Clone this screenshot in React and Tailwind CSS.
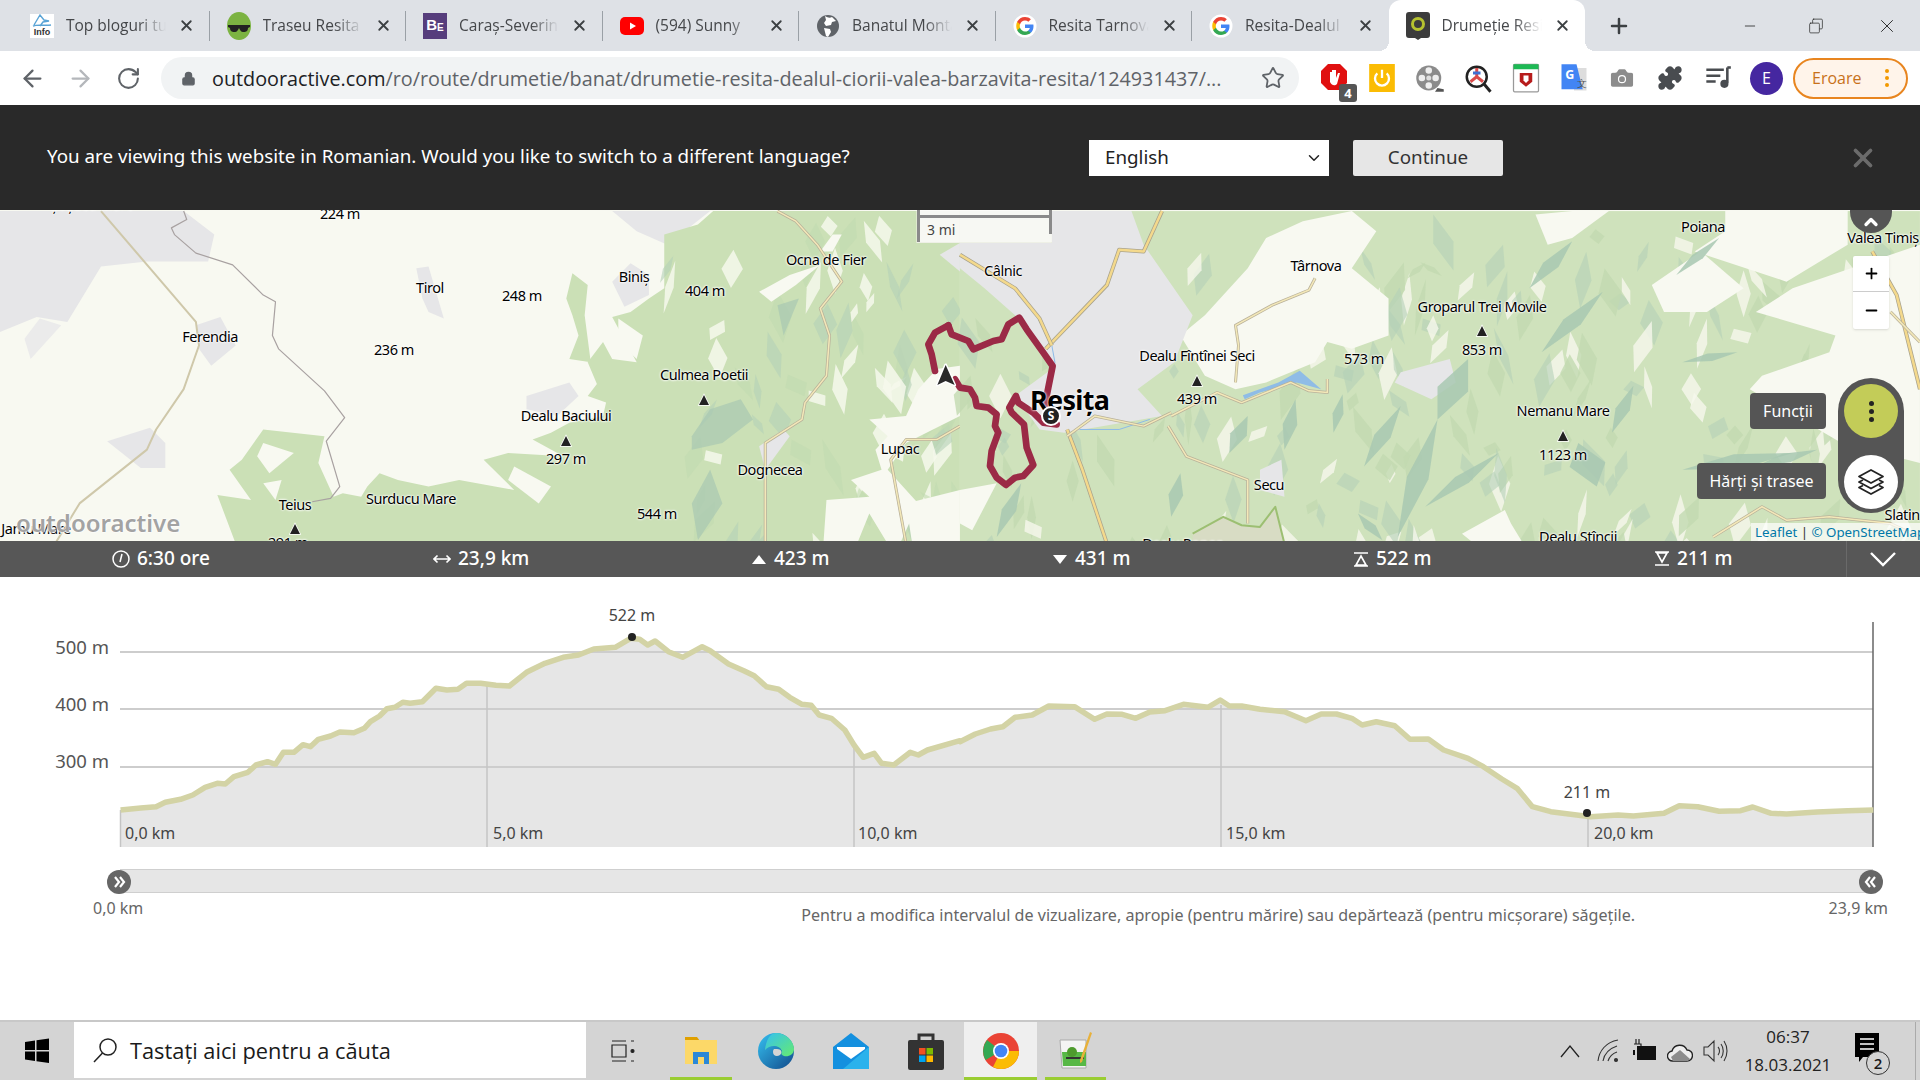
import React from 'react'
import { X, ArrowLeft, ArrowRight, RotateCw, Lock, Star, Plus, Minus, Square, Puzzle, ChevronDown, ChevronUp, Camera } from 'lucide-react'

const tabs = [
  { title: 'Top bloguri turism', icon: 'info' },
  { title: 'Traseu Resita', icon: 'green' },
  { title: 'Caraș-Severin', icon: 'be' },
  { title: '(594) Sunny', icon: 'yt' },
  { title: 'Banatul Montan', icon: 'globe' },
  { title: 'Resita Tarnova', icon: 'g' },
  { title: 'Resita-Dealul', icon: 'g' },
  { title: 'Drumeție Resita', icon: 'oa', active: true },
]

function GoogleG() {
  return (
    <svg width="24" height="24" viewBox="0 0 48 48">
      <circle cx="24" cy="24" r="23" fill="#fff" />
      <path fill="#4285f4" d="M41 24.5c0-1.300-.1-2.500-.3-3.700H24v7h9.600c-.4 2.200-1.700 4.100-3.500 5.300v4.400h5.700C39.100 34.400 41 29.900 41 24.500z" />
      <path fill="#34a853" d="M24 42c4.700 0 8.700-1.600 11.700-4.300L30 33.300c-1.600 1.100-3.600 1.700-6 1.700-4.600 0-8.500-3.100-9.900-7.300H8.300v4.600C11.200 38 17.100 42 24 42z" />
      <path fill="#fbbc05" d="M14.100 27.700c-.8-2.200-.8-5.200 0-7.400v-4.600H8.300c-2.400 4.700-2.400 11.900 0 16.600z" />
      <path fill="#ea4335" d="M24 13c2.600 0 4.900.9 6.700 2.600l5-5C32.700 7.800 28.700 6 24 6c-6.900 0-12.800 4-15.700 9.700l5.800 4.600C15.500 16.100 19.400 13 24 13z" />
    </svg>
  )
}

function Favicon({ kind }) {
  if (kind === 'g') return <GoogleG />
  if (kind === 'info') return (
    <div className="w-[24px] h-[24px] bg-white flex flex-col items-center">
      <svg width="22" height="13" viewBox="0 0 22 13"><path d="M3 11 9 1l4 5 5 1-6 1-3 4M2 12c5-2 11 0 18-1" fill="none" stroke="#5aa4d6" strokeWidth="1.400" /></svg>
      <span className="text-[9px] font-bold leading-[10px] text-[#333] font-['Liberation_Sans',sans-serif]">Info</span>
    </div>
  )
  if (kind === 'green') return (
    <svg width="24" height="28" viewBox="0 0 24 28">
      <ellipse cx="12" cy="14" rx="12" ry="14" fill="#7cb342" />
      <path d="M1 13h22v2l-2 1c0 4-3 4-5 4s-3-2-4-4c-1 2-2 4-4 4s-5 0-5-4l-2-1z" fill="#222" />
    </svg>
  )
  if (kind === 'be') return (
    <div className="w-[24px] h-[26px] bg-[#563d7c] flex items-center justify-center text-white text-[15px] font-bold font-['Liberation_Sans',sans-serif]">B<span className="text-[10px] mt-1">E</span></div>
  )
  if (kind === 'yt') return (
    <svg width="24" height="24" viewBox="0 0 24 24"><rect x="0" y="3" width="24" height="18" rx="5" fill="#f00" /><path d="M10 8.500 16 12l-6 3.500z" fill="#fff" /></svg>
  )
  if (kind === 'globe') return (
    <svg width="24" height="24" viewBox="0 0 24 24">
      <circle cx="12" cy="12" r="11" fill="#5f6368" />
      <path d="M9 2c3 2 5 2 7 1l4 4-4 1-1 3-5 1-2-3 2-3zM8 14l6 1 1 3-3 5-2-1-1-4z" fill="#fff" />
    </svg>
  )
  return (
    <svg width="24" height="28" viewBox="0 0 24 28">
      <path d="M3 0h18a3 3 0 0 1 3 3v20a3 3 0 0 1-3 3h-6l-3 2-3-2H3a3 3 0 0 1-3-3V3a3 3 0 0 1 3-3z" fill="#3c3c3c" />
      <circle cx="12" cy="12" r="5.500" fill="none" stroke="#b6c22f" strokeWidth="3" />
    </svg>
  )
}

function Tab({ tab, last }) {
  return (
    <div className={`relative w-[196.500px] h-[51px] shrink-0 flex items-center pl-[17px] ${tab.active ? 'bg-white rounded-t-[12px]' : ''}`}>
      {tab.active && <span className="absolute left-[-10px] bottom-0 w-[10px] h-[10px] bg-[radial-gradient(circle_at_0_0,transparent_10px,white_10px)]" />}
      {tab.active && <span className="absolute right-[-10px] bottom-0 w-[10px] h-[10px] bg-[radial-gradient(circle_at_100%_0,transparent_10px,white_10px)]" />}
      <span className="w-[24px] flex justify-center shrink-0"><Favicon kind={tab.icon} /></span>
      <span className="ml-[12px] w-[103px] overflow-hidden whitespace-nowrap text-[15.500px] text-[#45474a] [mask-image:linear-gradient(to_right,black_70%,transparent_97%)]">{tab.title}</span>
      <X className="ml-[9px] text-[#3c4043]" size={17} strokeWidth={2.600} />
      {!tab.active && !last && <span className="absolute right-0 top-[11px] h-[30px] w-px bg-[#9aa0a6]" />}
    </div>
  )
}

function ExtIcons() {
  return (
    <div className="flex items-center gap-[18px] ml-[20px]">
      <div className="relative w-[30px] h-[30px] flex justify-center">
        <svg width="28" height="28" viewBox="0 0 28 28"><path d="M8 1h12l7 7v12l-7 7H8l-7-7V8z" fill="#e01010" /><path d="M10 19V9h2v6-8h2v8-8h2v8l2-5h2l-3 11c-2 2-5 2-7-2z" fill="#fff" /></svg>
        <span className="absolute right-[-8px] bottom-[-9px] w-[18px] h-[18px] rounded-[3px] bg-[#555] text-white text-[13px] font-bold leading-[18px] text-center">4</span>
      </div>
      <svg width="30" height="28" viewBox="0 0 24 24"><rect x="1" width="22" height="24" fill="#fbbc04" /><path d="M8 8a6 6 0 1 0 8 0M12 5v7" fill="none" stroke="#fff" strokeWidth="2" /></svg>
      <svg width="30" height="30" viewBox="0 0 24 24"><circle cx="11" cy="12" r="10" fill="#8b8b8b" /><circle cx="11" cy="12" r="2" fill="#ddd" /><circle cx="11" cy="6" r="2.600" fill="#eee" /><circle cx="11" cy="18" r="2.600" fill="#eee" /><circle cx="5.500" cy="12" r="2.600" fill="#eee" /><circle cx="16.500" cy="12" r="2.600" fill="#eee" /><path d="M18 20l5 1v2h-7z" fill="#555" /></svg>
      <svg width="30" height="30" viewBox="0 0 24 24"><circle cx="11" cy="11" r="8" fill="#fff" stroke="#222" strokeWidth="2" /><path d="M11 4v7l-5 4M11 11l5 4" stroke="#d94b4b" strokeWidth="2.400" fill="none" /><path d="M8 8h6" stroke="#3f6fd1" strokeWidth="2.400" /><path d="M17 17l5 6" stroke="#222" strokeWidth="2.400" /></svg>
      <svg width="30" height="30" viewBox="0 0 24 24"><rect x="2" y="1" width="20" height="22" rx="1" fill="#fff" stroke="#999" /><rect x="2" y="1" width="20" height="4" fill="#1db954" /><path d="M7 8h10v7l-5 4-5-4z" fill="#b71c1c" /><path d="M10 10v4l2 2 2-2v-4z" fill="#fff" /></svg>
      <svg width="30" height="30" viewBox="0 0 24 24"><path d="M12 4h10v18H12z" fill="#ddd" /><path d="M2 1h12l5 20H2z" fill="#4285f4" /><text x="5" y="13" fontSize="10" fill="#fff" fontWeight="700">G</text><text x="14" y="19" fontSize="8" fill="#555">文</text></svg>
      <Camera className="text-white fill-[#8c8c8c] w-[30px]" size={28} strokeWidth={1} />
      <Puzzle className="text-[#494c50] fill-[#494c50] w-[30px]" size={26} strokeWidth={1.500} />
      <svg width="30" height="28" viewBox="0 0 24 24"><path d="M2 5h15M2 10h12M2 15h8M20 3v13" stroke="#494c50" strokeWidth="2.200" fill="none" /><circle cx="17.500" cy="17" r="3.500" fill="#494c50" /><path d="M20 3h3" stroke="#494c50" strokeWidth="2.200" /></svg>
      <div className="w-[33px] h-[33px] rounded-full bg-[#4527a0] text-white text-[16px] flex items-center justify-center ml-[-1px]">E</div>
      <div className="w-[115px] h-[41px] ml-[-8px] shrink-0 rounded-full border-2 border-[#e8851f] bg-[#fff4ea] flex items-center justify-between pl-[17px] pr-[17px] text-[#c8711a] text-[16px]">
        Eroare
        <span className="flex flex-col gap-[3px]">
          <span className="w-[4px] h-[4px] rounded-full bg-[#f29900]" />
          <span className="w-[4px] h-[4px] rounded-full bg-[#f29900]" />
          <span className="w-[4px] h-[4px] rounded-full bg-[#f29900]" />
        </span>
      </div>
    </div>
  )
}

const mapLabels = [
  ['Șoșdea Mare', 92, -5], ['224 m', 340, 4], ['Tirol', 430, 78], ['248 m', 522, 86], ['Biniș', 634, 67], ['404 m', 705, 81],
  ['Ocna de Fier', 826, 50], ['Ferendia', 210, 127], ['236 m', 394, 140], ['Culmea Poetii', 704, 165], ['Dealu Baciului', 566, 206],
  ['297 m', 566, 249], ['Dognecea', 770, 260], ['Lupac', 900, 239], ['Teius', 295, 295], ['Surducu Mare', 411, 289],
  ['544 m', 657, 304], ['Jamu Mare', 36, 319], ['291 m', 288, 333],
  ['Câlnic', 1003, 61], ['Târnova', 1316, 56], ['Poiana', 1703, 17], ['Valea Timiș', 1883, 28], ['Groparul Trei Movile', 1482, 97],
  ['853 m', 1482, 140], ['Dealu Fîntînei Seci', 1197, 146], ['439 m', 1197, 189], ['573 m', 1364, 149], ['Nemanu Mare', 1563, 201],
  ['1123 m', 1563, 245], ['Secu', 1269, 275], ['Slatina', 1906, 305], ['Dealu Stîncii', 1578, 327], ['Dealu Popor', 1182, 334],
]

const peaks = [[704, 190], [566, 231], [295, 319], [1482, 121], [1197, 171], [1563, 226]]

// tapered shape between two points, wide in the middle, like the shaded slopes on the map
function spindle(x1, y1, x2, y2, w) {
  const mx = (x1 + x2) / 2
  const my = (y1 + y2) / 2
  const len = Math.hypot(x2 - x1, y2 - y1) || 1
  const nx = ((y2 - y1) / len) * w
  const ny = ((x1 - x2) / len) * w
  return `${x1},${y1} ${mx + nx},${my + ny} ${x2},${y2} ${mx - nx},${my - ny}`
}

// fixed pseudo random flecks so the terrain has some grain
function flecks(count, seed, xMin, xMax, yMin, yMax) {
  const out = []
  let s = seed
  const next = () => {
    s = (s * 16807) % 2147483647
    return s / 2147483647
  }
  for (let i = 0; i < count; i++) {
    const x = xMin + next() * (xMax - xMin)
    const y = yMin + next() * (yMax - yMin)
    const dx = (next() - 0.5) * 70
    const dy = 40 + next() * 130
    out.push({ pts: spindle(Math.round(x), Math.round(y), Math.round(x + dx), Math.round(y + dy), 6 + next() * 14), tone: Math.floor(next() * 3) })
  }
  return out
}

const tones = ['#c2dab0', '#f6f8ec', '#b4d0b8']
const leftFlecks = flecks(70, 77, 1100, 1560, 40, 1000)
const rightFlecks = flecks(190, 4242, 0, 1560, 30, 1010)

const rightRidges = [
  [830, 470, 780, 650, 26], [780, 650, 715, 1000, 18], [1050, 270, 950, 450, 16], [470, 640, 440, 750, 14], [548, 590, 530, 740, 12],
  [720, 610, 660, 790, 14], [625, 575, 610, 690, 9], [1010, 720, 1040, 850, 30], [1180, 800, 1360, 750, 22], [1100, 550, 1065, 690, 12],
  [1270, 450, 1180, 480, 12], [360, 810, 345, 940, 12], [880, 750, 760, 910, 14], [1000, 120, 930, 260, 14], [1400, 740, 1300, 790, 14],
  [100, 840, 60, 1000, 12], [1240, 110, 1170, 220, 10], [650, 930, 690, 1010, 10],
]

function Poly({ pts, fill, opacity }) {
  return <polygon points={pts} fill={fill} opacity={opacity} />
}

function Line({ pts, color, w }) {
  return <polyline points={pts} fill="none" stroke={color} strokeWidth={w} vectorEffect="non-scaling-stroke" strokeLinejoin="round" />
}

function Road({ pts }) {
  return (
    <>
      <Line pts={pts} color="#b9b19a" w={3} />
      <Line pts={pts} color="#f3e8b8" w={1.500} />
    </>
  )
}

function YellowRoad({ pts }) {
  return (
    <>
      <Line pts={pts} color="#a9a38d" w={4} />
      <Line pts={pts} color="#f4d98c" w={2.500} />
    </>
  )
}

// map is a drawing, traced in the coordinates of the two zoomed crops
function MapArt() {
  const ridge = '#a8c8b2'
  return (
    <svg className="absolute inset-0" width="1920" height="332" viewBox="0 0 1920 332">
      <rect width="1920" height="332" fill="#f8f9f1" />
      <g transform="translate(0,-9) scale(.6122,.336)">
        <Poly fill="#e6e6e8" pts="0,30 300,30 350,100 340,180 240,180 165,195 110,360 60,345 0,390" />
        <Poly fill="#ebebeb" pts="40,410 65,350 100,370 50,470" />
        <Poly fill="#e6e6e8" pts="1000,30 1160,30 1090,130 1040,90" />
        <Poly fill="#e6e6e8" pts="680,200 700,195 725,350 700,330 690,290" />
        <Poly fill="#e6e6e8" pts="1000,240 1030,185 1060,220 1060,280 1020,315" />
        <Poly fill="#e6e6e8" pts="320,370 360,345 385,430 345,490 325,440" />
        <Poly fill="#e6e6e8" pts="860,580 930,540 945,580 910,640 860,620" />
        <Poly fill="#e6e6e8" pts="175,715 245,675 270,720 270,795 230,795" />
        <Poly fill="#cbe0b6" pts="1085,100 1140,70 1165,30 1568,30 1568,1020 385,1020 355,875 410,890 375,800 395,770 430,680 530,700 520,780 545,880 560,870 590,880 600,850 620,810 650,830 700,850 750,830 840,860 790,770 830,750 920,760 870,710 900,690 930,660 985,640 990,600 960,580 975,545 960,480 985,420 1000,470 1040,480 1000,345 1030,330 1060,290 1085,260" />
        <Poly fill="#cbe0b6" pts="925,290 935,215 960,250 955,340 965,480 930,470 945,400 935,340" />
        {leftFlecks.map((f, i) => <Poly key={i} pts={f.pts} fill={tones[f.tone]} opacity={f.tone === 1 ? 0.85 : 0.6} />)}
        <Poly fill="#f8f9f1" pts="1568,490 1530,500 1500,560 1480,640 1420,650 1450,700 1430,740 1440,800 1390,830 1420,880 1350,890 1345,1020 1400,1020 1420,930 1450,1020 1470,1020 1500,900 1450,800 1480,720 1568,640" />
        <Poly fill="#f8f9f1" pts="1480,900 1568,860 1568,1020 1490,1020" />
        <Poly fill="#f8f9f1" pts="1240,270 1290,220 1340,190 1300,250 1260,300" />
        <Poly fill="#f8f9f1" pts="430,720 480,750 440,810 420,760" />
        <Poly fill="#f8f9f1" pts="840,790 900,850 880,900 830,830" />
        <Poly fill="#f8f9f1" pts="430,840 460,830 450,890" />
        <Poly fill="#f8f9f1" pts="1010,350 1050,400 1040,470 1010,420" />
        <Poly fill="#f8f9f1" pts="1360,100 1375,100 1360,150 1340,150" />
        <Poly fill={ridge} opacity=".7" pts="1130,700 1160,620 1210,590 1230,650 1180,720 1130,740" />
        <Poly fill={ridge} opacity=".7" pts="1160,800 1180,900 1140,1010 1130,900" />
        <Poly fill={ridge} opacity=".7" pts="1270,310 1305,290 1280,400" />
        <Poly fill="#e6e6e8" pts="1240,730 1280,680 1290,700 1250,800" />
        <Poly fill="#eef0e6" pts="1497,30 1568,30 1568,125 1497,125" />
        <Poly fill="#e6e6e8" pts="1568,125 1568,210 1535,160" />
        <Line pts="165,30 320,360 325,430 300,560 255,680 240,740 130,900 90,1020" color="#cfc8aa" w={2} />
        <Line pts="300,30 305,55 280,80 285,100 320,155 380,190 430,280 450,300 445,400 455,440 530,565 563,645 533,715 555,850 540,885 510,895" color="#a8a1a1" w={1.200} />
        <Road pts="1270,30 1300,60 1335,130 1375,240 1340,320 1355,400 1350,520 1315,600 1310,650 1250,720 1250,1020" />
        <Road pts="1568,670 1530,710 1480,710 1455,770 1480,1020" />
      </g>
      <g transform="translate(960,-9) scale(.6122,.336)">
        <rect x="0" y="30" width="1568" height="1000" fill="#cfe2bc" />
        {rightFlecks.map((f, i) => <Poly key={i} pts={f.pts} fill={tones[f.tone]} opacity={f.tone === 2 ? 0.6 : 0.8} />)}
        <Poly fill="#f8f9f1" pts="500,110 560,60 640,30 680,90 640,200 700,290 700,400 640,440 600,420 580,480 500,540 450,560 400,520 360,400 400,340 470,200" />
        <Poly fill="#f8f9f1" pts="1250,30 1450,30 1450,130 1350,240 1200,150 1250,90" />
        <Poly fill="#f8f9f1" pts="1360,260 1568,130 1568,780 1440,720 1290,560 1310,520 1420,450 1430,400 1300,330" />
        <Poly fill="#f8f9f1" pts="940,40 1000,30 1060,30 1000,110 960,130" />
        <Poly fill="#f8f9f1" pts="1130,250 1210,150 1280,260 1220,330 1150,330" />
        <Poly fill="#f8f9f1" pts="900,960 890,920 820,990 840,1020 920,1020" />
        <Poly fill="#f8f9f1" pts="0,860 60,840 20,980 0,960" />
        <Poly fill="#e6e6e8" pts="0,125 150,125 150,30 280,30 300,130 380,340 350,480 290,560 330,640 170,690 130,680 90,580 150,500 120,420 90,340 40,260 0,200" />
        <Poly fill="#e6e6e8" pts="720,510 800,470 810,540 770,590 710,540" />
        <Poly fill="#e6e6e8" pts="490,800 525,770 530,880 490,860" />
        <Poly fill="#eef0e6" pts="0,30 150,30 150,125 0,125" />
        <Poly fill="#d8dcc4" pts="380,990 430,940 460,965 490,970 515,910 530,1020 380,1020" />
        <Line pts="380,990 430,940 460,965 490,970 515,910 530,1020" color="#9cbf72" w={2} />
        {rightRidges.map(([a, b, c, d, w]) => <Poly key={`${a}-${b}`} pts={spindle(a, b, c, d, w)} fill={ridge} opacity={0.85} />)}
        <Poly fill="#8fbce6" pts="462,578 520,540 555,505 590,560 550,540 490,570 465,590" />
        <Line pts="90,260 125,340 150,430 155,480 140,620" color="#8cbbe8" w={1} />
        <Line pts="195,680 260,680 310,650" color="#8cbbe8" w={1} />
        <Road pts="580,230 570,265 510,310 450,370 455,430 450,540" />
        <Road pts="345,640 420,570 460,600 500,570 540,540 570,565 600,570 600,530" />
        <Road pts="340,670 370,760 470,830 470,960" />
        <Road pts="1230,1000 1310,910 1350,950 1420,940 1520,960 1568,1000" />
        <YellowRoad pts="330,30 300,150 260,145 240,250 140,440" />
        <YellowRoad pts="0,160 90,260 130,350 150,430" />
        <YellowRoad pts="175,680 200,800 240,1020" />
        <Road pts="175,700 220,640 300,670 345,630" />
        <YellowRoad pts="1490,150 1530,280 1568,560" />
        <Road pts="1520,330 1568,420" />
      </g>
      {peaks.map(([x, y]) => (
        <polygon key={x} points={`${x - 5},${y + 5} ${x},${y - 5} ${x + 5},${y + 5}`} fill="#222" stroke="#fff" strokeWidth="1.500" paintOrder="stroke" />
      ))}
      <g transform="translate(880,81) scale(.3333)" fill="none" stroke="#9b2a46" strokeWidth="20" strokeLinejoin="round" strokeLinecap="round">
        <polyline points="205,103 165,125 145,160 155,190 165,240" />
        <polyline points="225,265 240,290 270,295 285,320 290,345 325,350 350,370 345,405 355,425 335,480 330,525 350,560 378,582 405,560 430,555 460,522 440,470 432,400 395,365 388,350 408,315 415,335 460,365 490,395 530,400" />
        <polyline points="205,103 215,130 265,150 280,175 340,150 365,145 385,100 418,80 440,115 490,185 518,225 505,290 495,340 520,375" />
        <polygon points="197,222 224,282 197,270 172,282" fill="#2a2a2a" stroke="#fff" strokeWidth="9" paintOrder="stroke" />
      </g>
    </svg>
  )
}

function MapView() {
  return (
    <div className="relative h-[331px] overflow-hidden font-['Noto_Sans',sans-serif]">
      <MapArt />
      {mapLabels.map(([text, x, y]) => (
        <span key={text} className="absolute -translate-x-1/2 -translate-y-1/2 whitespace-nowrap text-[14.500px] text-black tracking-[-0.450px] [text-shadow:0_0_2px_#fff,0_0_2px_#fff,0_0_3px_#fff]" style={{ left: x, top: y }}>{text}</span>
      ))}
      <span className="absolute left-[1030px] top-[172px] text-[27px] leading-[36px] font-bold text-black tracking-[-0.700px] [text-shadow:0_0_2px_#fff,0_0_3px_#fff]">Reșița</span>
      <span className="absolute left-[1041px] top-[196px] w-[20px] h-[20px] rounded-full bg-[#222] border-2 border-white text-white text-[12px] font-bold leading-[16px] text-center">S</span>
      <span className="absolute left-[16px] top-[298px] text-[24px] leading-[30px] font-semibold text-[#a3a3a3] [text-shadow:0_0_2px_#fff,0_0_2px_#fff,0_0_2px_#fff]">outdooractive</span>

      <div className="absolute left-[917px] top-0 w-[135px] h-[32px] bg-white/50">
        <div className="h-[8px] border-[3px] border-t-0 border-[#8a8a8a]" />
        <div className="h-[24px] border-l-[3px] border-[#8a8a8a] pl-[7px] text-[14px] text-[#444] leading-[24px] relative">
          3 mi
          <span className="absolute right-0 top-0 h-[16px] w-[3px] bg-[#8a8a8a]" />
        </div>
      </div>
      <div className="absolute left-[1850px] top-[-19px] w-[42px] h-[42px] rounded-full bg-[#555] flex items-end justify-center text-white pb-[1px]">
        <ChevronUp size={20} strokeWidth={4} />
      </div>
      <div className="absolute left-[1853px] top-[46px] w-[36px] h-[73px] bg-white rounded-[2px] shadow flex flex-col text-black">
        <div className="h-[36px] border-b border-[#ccc] flex items-center justify-center"><Plus size={17} strokeWidth={2.500} /></div>
        <div className="flex-1 flex items-center justify-center"><Minus size={17} strokeWidth={2.500} /></div>
      </div>
      <div className="absolute left-[1750px] top-[183px] w-[76px] h-[36px] rounded-[4px] bg-[#555] text-white text-[16px] flex items-center justify-center">Funcții</div>
      <div className="absolute left-[1697px] top-[253px] w-[129px] h-[36px] rounded-[4px] bg-[#555] text-white text-[16px] flex items-center justify-center whitespace-nowrap">Hărți și trasee</div>
      <div className="absolute left-[1838px] top-[168px] w-[66px] h-[135px] rounded-full bg-[#555] flex flex-col items-center pt-[6px] gap-[17px]">
        <div className="w-[54px] h-[54px] rounded-full bg-[#c3cc58] flex flex-col items-center justify-center gap-[3px]">
          <span className="w-[5px] h-[5px] rounded-full bg-[#222]" />
          <span className="w-[5px] h-[5px] rounded-full bg-[#222]" />
          <span className="w-[5px] h-[5px] rounded-full bg-[#222]" />
        </div>
        <div className="w-[54px] h-[54px] rounded-full bg-white flex items-center justify-center">
          <svg width="28" height="28" viewBox="0 0 28 28" fill="none" stroke="#222" strokeWidth="1.800" strokeLinejoin="round">
            <path d="M14 2 26 8.500 14 15 2 8.500z" />
            <path d="M6 12 2 14l12 6.500L26 14l-4-2" />
            <path d="M6 17.500 2 19.500 14 26l12-6.500-4-2" />
          </svg>
        </div>
      </div>
      <div className="absolute right-0 bottom-0 h-[18px] pl-[4px] bg-white/70 text-[13.300px] leading-[18px] text-[#333] whitespace-nowrap overflow-hidden w-[169px]">
        <span className="text-[#0078a8]">Leaflet</span> | <span className="text-[#0078a8]">© OpenStreetMap</span>
      </div>
    </div>
  )
}

function StatIcon({ kind }) {
  if (kind === 'clock') return <svg width="18" height="18" viewBox="0 0 18 18" fill="none" stroke="#fff" strokeWidth="1.500"><circle cx="9" cy="9" r="8" /><path d="M10 4 8 12" /></svg>
  if (kind === 'dist') return <svg width="18" height="18" viewBox="0 0 18 18" fill="none" stroke="#fff" strokeWidth="1.600"><path d="M1 9h16M4.500 5.500 1 9l3.500 3.500M13.500 5.500 17 9l-3.500 3.500" /></svg>
  if (kind === 'up') return <svg width="16" height="18" viewBox="0 0 16 18"><path d="M1 14 8 5l7 9z" fill="#fff" /></svg>
  if (kind === 'down') return <svg width="16" height="18" viewBox="0 0 16 18"><path d="M1 5h14l-7 9z" fill="#fff" /></svg>
  if (kind === 'max') return <svg width="16" height="18" viewBox="0 0 16 18" fill="none" stroke="#fff" strokeWidth="1.600"><path d="M1 3h14M3 15h10L8 6zM1 16h14" /></svg>
  return <svg width="16" height="18" viewBox="0 0 16 18" fill="none" stroke="#fff" strokeWidth="1.600"><path d="M1 2h14M3 3h10l-5 9zM1 15h14" /></svg>
}

const stats = [
  { icon: 'clock', text: '6:30 ore', cell: 'w-[321px]' },
  { icon: 'dist', text: '23,9 km', cell: 'w-[318px]' },
  { icon: 'up', text: '423 m', cell: 'w-[301px]' },
  { icon: 'down', text: '431 m', cell: 'w-[301px]' },
  { icon: 'max', text: '522 m', cell: 'w-[301px]' },
  { icon: 'min', text: '211 m', cell: 'w-[192px]' },
]

function StatsBar() {
  return (
    <div className="h-[36px] bg-[#575757] flex items-center pl-[112px] text-white text-[19px] leading-[34px] font-medium font-['Noto_Sans',sans-serif]">
      {stats.map((s) => (
        <div key={s.text} className={`flex items-center gap-[7px] ${s.cell}`}>
          <StatIcon kind={s.icon} />
          <span className="-mt-[2px]">{s.text}</span>
        </div>
      ))}
      <div className="h-full w-[73px] border-l border-[#6a6a6a] flex items-center justify-center">
        <svg width="28" height="16" viewBox="0 0 28 16" fill="none" stroke="#fff" strokeWidth="2.400"><path d="M2 2l12 12L26 2" /></svg>
      </div>
    </div>
  )
}

const profileL = [[197,690],[230,684],[255,680],[270,667],[295,658],[315,645],[335,622],[355,610],[368,612],[382,590],[405,577],[418,555],[437,545],[450,553],[463,517],[480,517],[495,494],[507,500],[520,478],[540,468],[555,456],[578,458],[595,445],[605,425],[620,408],[632,386],[645,382],[658,367],[670,370],[690,365],[712,325],[730,330],[748,328],[762,310],[785,310],[810,316],[832,318],[860,277],[890,250],[920,232],[945,225],[970,207],[1005,202],[1030,175],[1045,178],[1058,195],[1070,183],[1092,215],[1115,232],[1147,200],[1160,212],[1190,252],[1215,272],[1232,287],[1252,320],[1272,328],[1290,352],[1310,373],[1325,376],[1338,405],[1358,415],[1380,450],[1395,495],[1410,532],[1428,520],[1440,550],[1460,555],[1487,517],[1500,525],[1515,510],[1568,482]]
const profileR = [[0,485],[25,462],[50,447],[70,440],[90,412],[118,405],[145,378],[187,380],[220,418],[240,402],[265,403],[287,415],[310,396],[335,392],[365,373],[405,382],[425,360],[440,378],[460,378],[490,388],[530,395],[565,422],[590,402],[615,402],[640,415],[657,435],[680,425],[710,437],[735,478],[765,477],[790,510],[830,535],[855,560],[885,597],[910,625],[935,680],[965,695],[1030,710],[1075,705],[1100,708],[1150,700],[1175,677],[1205,680],[1240,694],[1275,692],[1295,681],[1325,700],[1350,702],[1400,696],[1450,692],[1492,690]]

const profile = [
  ...profileL.map(([x, y]) => `${(x * 0.6122).toFixed(1)},${(3 + y / 3).toFixed(1)}`),
  ...profileR.map(([x, y]) => `${(960 + x * 0.6122).toFixed(1)},${(3 + y / 3).toFixed(1)}`),
].join(' ')

const axisY = [['500 m', 71], ['400 m', 128], ['300 m', 185]]
const axisX = [['0,0 km', 125], ['5,0 km', 493], ['10,0 km', 858], ['15,0 km', 1226], ['20,0 km', 1594]]

function Chart() {
  return (
    <div className="relative h-[270px]">
      <svg className="absolute inset-0" width="1920" height="270" viewBox="0 0 1920 270">
        <polygon points={`120.600,270 ${profile} 1873,270`} fill="#e6e6e6" />
        {[75, 132, 190].map((y) => <line key={y} x1="120" x2="1873" y1={y} y2={y} stroke="#cdcdcd" strokeWidth="2" />)}
        {[[120.500, 233], [487, 106], [854, 168], [1221, 128], [1588, 238]].map(([x, y]) => <line key={x} x1={x} x2={x} y1={y} y2="270" stroke="#c4c4c4" strokeWidth="1.500" />)}
        <line x1="1873" x2="1873" y1="45" y2="270" stroke="#666" strokeWidth="1.500" />
        <polyline points={profile} fill="none" stroke="#d3d3a5" strokeWidth="5.500" strokeLinejoin="round" />
        <circle cx="632" cy="60" r="4" fill="#222" />
        <circle cx="1587" cy="236" r="4" fill="#222" />
      </svg>
      <span className="absolute left-[632px] top-[38px] -translate-x-1/2 -translate-y-1/2 text-[16px] text-[#444]">522 m</span>
      <span className="absolute left-[1587px] top-[215px] -translate-x-1/2 -translate-y-1/2 text-[16px] text-[#444]">211 m</span>
      {axisY.map(([t, y]) => (
        <span key={t} className="absolute right-[1811px] -translate-y-1/2 text-[18.500px] text-[#555] whitespace-nowrap" style={{ top: y - 1 }}>{t}</span>
      ))}
      {axisX.map(([t, x]) => (
        <span key={t} className="absolute top-[256px] -translate-y-1/2 text-[16px] text-[#444] whitespace-nowrap" style={{ left: x }}>{t}</span>
      ))}
    </div>
  )
}

function Handle({ right }) {
  return (
    <span className={`absolute top-0 w-[24px] h-[24px] rounded-full bg-[#666] text-white flex items-center justify-center ${right ? 'right-[-10px]' : 'left-[-13px]'}`}>
      <svg width="14" height="14" viewBox="0 0 14 14" fill="none" stroke="#fff" strokeWidth="2.200">
        {right ? <path d="M6 2 2 7l4 5M11 2 7 7l4 5" /> : <path d="M3 2l4 5-4 5M8 2l4 5-4 5" />}
      </svg>
    </span>
  )
}

function Taskbar() {
  return (
    <div className="h-[60px] bg-[#d4d4d4] border-t-2 border-[#c8c8c8] flex items-stretch font-['Open_Sans',sans-serif] text-[#1a1a1a]">
      <div className="w-[74px] flex items-center justify-center">
        <svg width="26" height="26" viewBox="0 0 26 26" fill="#000"><path d="M1 4l10-1.500V12H1zM12.500 2.300 25 .5V12H12.500zM1 13.500h10V23L1 21.500zM12.500 13.500H25V25l-12.500-1.800z" /></svg>
      </div>
      <div className="w-[512px] h-[56px] bg-white flex items-center pl-[17px] gap-[11px]">
        <svg width="28" height="28" viewBox="0 0 28 28" fill="none" stroke="#222" strokeWidth="1.500"><circle cx="17" cy="11" r="8" /><path d="M11.500 17 3 26" /></svg>
        <span className="text-[21.800px] mt-[2px]">Tastați aici pentru a căuta</span>
      </div>
      <div className="w-[74px] flex items-center justify-center">
        <svg width="24" height="26" viewBox="0 0 24 26" fill="none" stroke="#222" strokeWidth="1.200"><path d="M1 3h14M1 23h14M1 7h14v12H1zM20 3h3M20 23h3" /><circle cx="21.500" cy="13" r="1.500" fill="#222" /></svg>
      </div>
      <div className="relative w-[62px] ml-[10px] mr-[13px] flex items-center justify-center">
        <svg width="34" height="34" viewBox="0 0 34 34"><path d="M1 3h12l3 4H1z" fill="#e0a000" /><path d="M1 6h32v24H1z" fill="#fcd868" /><path d="M9 18h16v12h-5v-7h-6v7H9z" fill="#2b88d8" /></svg>
        <span className="absolute bottom-0 inset-x-0 h-[3px] bg-[#9acd32]" />
      </div>
      <div className="w-[62px] flex items-center justify-center">
        <svg width="38" height="38" viewBox="0 0 38 38"><defs><linearGradient id="edgeA" x1="0" y1="0" x2="1" y2="1"><stop offset="0" stopColor="#35c1f1" /><stop offset="1" stopColor="#114a8b" /></linearGradient><linearGradient id="edgeB" x1="0" y1="0" x2="1" y2="1"><stop offset="0" stopColor="#35c1f1" /><stop offset="1" stopColor="#66eb6e" /></linearGradient></defs><circle cx="19" cy="19" r="18" fill="url(#edgeA)" /><path d="M19 1c10 0 18 8 18 16 0 6-6 8-10 7-3-1-3-3-2-5-2-6-12-7-17-1C9 8 13 1 19 1z" fill="url(#edgeB)" /><path d="M20 17c4 0 6 3 3 6-3 2-7 1-7-3s2-3 4-3z" fill="#d4d4d4" /></svg>
      </div>
      <div className="w-[80px] ml-[4px] flex items-center justify-center">
        <svg width="36" height="36" viewBox="0 0 36 36"><path d="M18 0 36 14v22H0V14z" fill="#1490df" /><path d="M4 14h28v2L18 26 4 16z" fill="#fff" /><path d="M36 14v22H10z" fill="#35c1f1" opacity=".7" /></svg>
      </div>
      <div className="w-[70px] flex items-center justify-center">
        <svg width="36" height="38" viewBox="0 0 36 38"><path d="M11 8V3h14v5" fill="none" stroke="#333" strokeWidth="3" /><rect y="8" width="36" height="30" rx="2" fill="#333" /><rect x="11" y="16" width="6.500" height="6.500" fill="#f25022" /><rect x="18.500" y="16" width="6.500" height="6.500" fill="#7fba00" /><rect x="11" y="23.500" width="6.500" height="6.500" fill="#00a4ef" /><rect x="18.500" y="23.500" width="6.500" height="6.500" fill="#ffb900" /></svg>
      </div>
      <div className="relative w-[73px] ml-[3px] bg-[#efefef] flex items-center justify-center">
        <svg width="36" height="36" viewBox="0 0 36 36"><circle cx="18" cy="18" r="18" fill="#ea4335" /><path d="M18 18 2.500 27A18 18 0 0 1 4 7z" fill="#34a853" /><path d="M18 18h18a18 18 0 0 1-18 18 18 18 0 0 1-8-2z" fill="#fbbc05" /><circle cx="18" cy="18" r="8" fill="#fff" /><circle cx="18" cy="18" r="6.300" fill="#4285f4" /></svg>
        <span className="absolute bottom-0 inset-x-0 h-[3px] bg-[#9acd32]" />
      </div>
      <div className="relative w-[61px] ml-[8px] flex items-center justify-center">
        <svg width="36" height="38" viewBox="0 0 36 38"><path d="M2 8h26v28H4z" fill="#f4f4f4" stroke="#aaa" /><path d="M4 20h24v14H5z" fill="#57b846" /><circle cx="14" cy="20" r="5" fill="#4e9b2e" /><path d="M8 26h18" stroke="#333" strokeWidth="2" /><path d="M34 1 24 30l-2 1 0-3L32 0z" fill="#e8b13a" /></svg>
        <span className="absolute bottom-0 inset-x-0 h-[3px] bg-[#9acd32]" />
      </div>
      <div className="ml-auto flex items-center pr-[4px]">
        <svg width="20" height="14" viewBox="0 0 20 14" fill="none" stroke="#222" strokeWidth="1.300" className="mr-[16px]"><path d="M1 13 10 2l9 11" /></svg>
        <svg width="24" height="24" viewBox="0 0 24 24" fill="none" stroke="#333" strokeWidth="1.100" className="mr-[11px]"><path d="M2 22C3 12 10 3 22 1M7 22c1-6 5-12 14-15M12 22c1-3 3-7 9-9" /><circle cx="20" cy="21" r="1.500" fill="#333" /></svg>
        <svg width="26" height="24" viewBox="0 0 26 24" className="mr-[10px]"><path d="M5 0v5M8 0v5M3 5h7v5H7v4" stroke="#222" strokeWidth="1.200" fill="none" /><rect x="6" y="7" width="19" height="14" fill="#111" /><rect x="2" y="11" width="2" height="5" fill="#111" /></svg>
        <svg width="26" height="22" viewBox="0 0 26 22"><path d="M6 21a5 5 0 0 1-1-10 8 8 0 0 1 15-1 5.500 5.500 0 0 1 0 11z" fill="#eee" stroke="#222" strokeWidth="1.400" /><path d="M4 17l9-7 10 9-2 2H6z" fill="#8d8d8d" /></svg>
        <svg width="26" height="26" viewBox="0 0 26 26" fill="none" stroke="#333" strokeWidth="1.100" className="ml-[10px]"><path d="M1 9h4l6-6v20l-6-6H1zM15 9c2 2 2 6 0 8M18 6c3 4 3 10 0 14M21 3c4 6 4 14 0 20" /></svg>
        <div className="w-[96px] ml-[11px] flex flex-col items-center text-[17px] leading-[28px] text-[#222]">
          <span>06:37</span>
          <span>18.03.2021</span>
        </div>
        <div className="relative w-[40px] h-[40px] ml-[11px]">
          <svg className="absolute left-[8px] top-[2px]" width="26" height="30" viewBox="0 0 26 30"><path d="M0 0h24v24H8l-4 5v-5H0z" fill="#000" /><path d="M5 6h14M5 11h14M5 16h14" stroke="#fff" strokeWidth="1.500" /></svg>
          <span className="absolute right-[-3px] bottom-[-4px] w-[24px] h-[24px] rounded-full border border-[#333] bg-[#d4d4d4] text-[15px] font-semibold leading-[22px] text-center">2</span>
        </div>
        <span className="w-px h-full bg-[#aaa] ml-[28px]" />
      </div>
    </div>
  )
}

export default function App() {
  return (
    <div className="w-[1920px] h-[1080px] overflow-hidden flex flex-col bg-white font-['Open_Sans',sans-serif]">
      {/* TABS */}
      <div className="h-[51px] bg-[#dee1e6] flex items-center pl-[13px]">
        {tabs.map((t, i) => <Tab key={t.title} tab={t} last={i === 6} />)}
        <Plus className="ml-[22px] text-[#3c4043]" size={24} strokeWidth={2.500} />
        <Minus className="ml-[111px] text-[#222]" size={16} strokeWidth={1.200} />
        <div className="relative ml-[50px] w-[16px] h-[18px]">
          <Square className="absolute left-[3px] top-[-2px] text-[#222] h-[18px]" size={13} strokeWidth={1.300} />
          <Square className="absolute left-0 top-[2px] text-[#222] fill-[#dee1e6] h-[18px]" size={13} strokeWidth={1.300} />
        </div>
        <X className="ml-[52px] text-[#222]" size={22} strokeWidth={1} />
      </div>
      {/* TOOLBAR */}
      <div className="h-[54px] bg-white flex items-center">
        <ArrowLeft className="ml-[19px] text-[#5f6368]" size={27} strokeWidth={2} />
        <ArrowRight className="ml-[21px] text-[#b4b7bb]" size={27} strokeWidth={2} />
        <RotateCw className="ml-[22px] text-[#5f6368]" size={25} strokeWidth={2} />
        <div className="ml-[20px] w-[1138px] h-[42px] rounded-full bg-[#f1f3f4] flex items-center pl-[20px]">
          <Lock className="text-[#5f6368] fill-[#5f6368]" size={15} strokeWidth={2} />
          <span className="ml-[16px] mt-[2px] text-[19.800px] whitespace-nowrap text-[#5f6368] w-[1030px] overflow-hidden"><span className="text-[#202124]">outdooractive.com</span>/ro/route/drumetie/banat/drumetie-resita-dealul-ciorii-valea-barzavita-resita/124931437/...</span>
          <Star className="ml-[19px] text-[#5f6368] shrink-0" size={24} strokeWidth={1.800} />
        </div>
        <ExtIcons />
      </div>
      {/* LANGUAGE BANNER */}
      <div className="h-[105px] bg-[#292929] flex items-center pl-[47px] text-[18.800px] font-['Noto_Sans',sans-serif]">
        <span className="w-[1042px] text-white -mt-[2px]">You are viewing this website in Romanian. Would you like to switch to a different language?</span>
        <div className="w-[240px] h-[36px] bg-white flex items-center justify-between pl-[16px] pr-[6px] text-[#222]">
          English
          <ChevronDown size={18} strokeWidth={2} />
        </div>
        <div className="ml-[24px] w-[150px] h-[36px] rounded-[2px] bg-[#e6e6e6] flex items-center justify-center text-[#333]">Continue</div>
        <X className="ml-[345px] text-[#6b6b6b]" size={30} strokeWidth={3} />
      </div>
      <MapView />
      <StatsBar />
      {/* ELEVATION PROFILE */}
      <div className="flex-1 font-['Noto_Sans',sans-serif]">
        <Chart />
        <div className="relative ml-[120px] w-[1753px] h-[24px] mt-[22px] bg-[#e6e6e6] border-y border-[#cfcfcf]">
          <Handle />
          <Handle right />
        </div>
        <div className="flex items-start pl-[93px] pr-[32px] pt-[3px] text-[16px] text-[#666]">
          <span>0,0 km</span>
          <span className="ml-[658px] mt-[7px] whitespace-nowrap text-[16.100px]">Pentru a modifica intervalul de vizualizare, apropie (pentru mărire) sau depărtează (pentru micșorare) săgețile.</span>
          <span className="ml-auto">23,9 km</span>
        </div>
      </div>
      <Taskbar />
    </div>
  )
}
